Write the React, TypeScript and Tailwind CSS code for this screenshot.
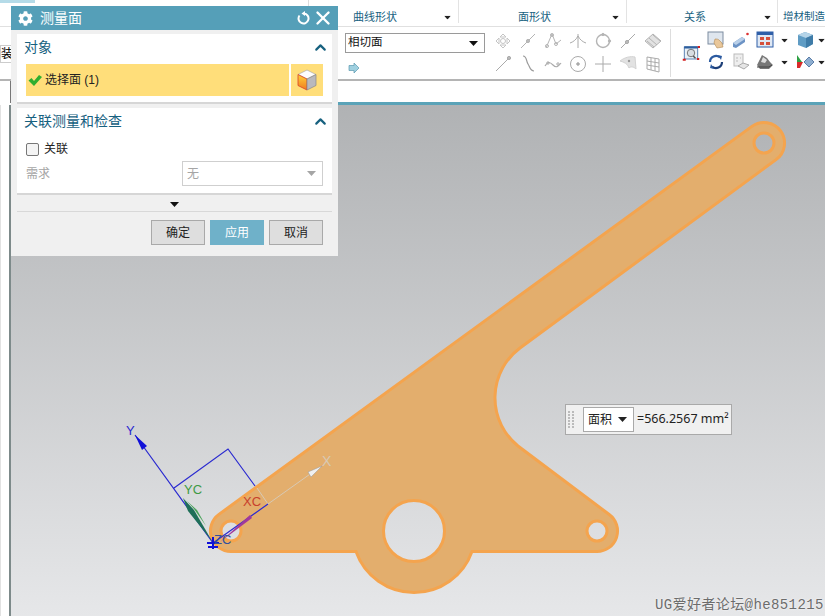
import { ChevronUp, X } from "lucide-react";
import { FaCog } from "react-icons/fa";

const font = "font-['Liberation_Sans','Noto_Sans_CJK_SC',sans-serif]";

function Caret({ className = "" }: { className?: string }) {
  return (
    <svg width="9" height="5" viewBox="0 0 9 5" className={className}>
      <path d="M0 0h9L4.5 5z" fill="currentColor" />
    </svg>
  );
}

// grey, disabled curve tools, first row then second row
const curveTools = [
  <g key="a" fill="none" stroke="#c4c4c4"><circle cx="10" cy="10" r="2.5" /><path d="M3 10l3-3v6zM17 10l-3-3v6zM10 3l-3 3h6zM10 17l-3-3h6z" /></g>,
  <g key="b" fill="none" stroke="#b4b4b4"><path d="M3 17L17 3" /><circle cx="10" cy="10" r="1.6" fill="#bbb" /></g>,
  <g key="c" fill="none" stroke="#b4b4b4"><path d="M3 17L9 3l4 10 5-4" /><circle cx="9" cy="4" r="1.5" /><circle cx="13" cy="13" r="1.5" /><circle cx="4" cy="15" r="1.5" /></g>,
  <g key="d" fill="none" stroke="#aaa"><path d="M10 3v14M2 12c3-1 6-3 8-7 2 4 5 6 8 7" /></g>,
  <g key="e" fill="none" stroke="#b4b4b4"><circle cx="10" cy="10" r="6.5" strokeWidth="1.4" /><circle cx="10" cy="3.5" r="1.2" /><circle cx="16.5" cy="10" r="1.2" /></g>,
  <g key="f" fill="none" stroke="#aaa"><path d="M3 17L17 3" /><circle cx="9" cy="11" r="1.6" fill="#bbb" /></g>,
  <g key="g" stroke="#b4b4b4" fill="#e2e2e2"><path d="M2 10l8-7 8 7-8 7z" /><path d="M6 7l8 7M10 4l7 6M4 10l7 6" fill="none" /></g>,
  <g key="h" fill="none" stroke="#aaa"><path d="M3 17L15 5" /><circle cx="16" cy="4" r="1.6" fill="#bbb" /></g>,
  <g key="i" fill="none" stroke="#999"><path d="M5 2c4 0 3 5 5 8s2 7 6 7" strokeWidth="1.2" /></g>,
  <g key="j" fill="none" stroke="#aaa"><path d="M2 12c3-5 5-4 8-1s5 2 8-2" strokeWidth="1.2" /><circle cx="5" cy="9" r="1.2" /><circle cx="15" cy="10" r="1.2" /></g>,
  <g key="k" fill="none" stroke="#aaa"><circle cx="10" cy="10" r="7.5" /><circle cx="10" cy="10" r="1.3" fill="#aaa" /></g>,
  <g key="l" fill="none" stroke="#aaa"><path d="M10 2v16M2 10h16" /></g>,
  <g key="m"><path d="M2 7c5-4 11-5 15-4l1 12c-2-2-5-3-7-1-1-4-5-6-9-7z" fill="#e2e2e2" stroke="#d2d2d2" /><circle cx="11" cy="7" r="1.2" fill="#999" /></g>,
  <g key="n" fill="none" stroke="#aaa"><path d="M4 3l12 2v13L4 15zM8 4v12M12 4.500v12.500M4 7l12 2M4 11l12 2" /></g>,
];

function CameraFrame() {
  return (
    <svg width="18" height="18" viewBox="0 0 24 24">
      <rect x="3" y="4" width="18" height="16" fill="#e9f0f7" stroke="#2d5f9e" />
      <rect x="3" y="3" width="18" height="3" fill="#2d5f9e" />
      <circle cx="12" cy="12" r="5" fill="#d8dde2" stroke="#555" />
      <path d="M15 16l3 3" stroke="#555" strokeWidth="2" />
      <path d="M1 21h4M21 4h3M20 20h3" stroke="#d32020" strokeWidth="2.500" />
    </svg>
  );
}

const rightTools = [
  <svg key="hand" width="18" height="18" viewBox="0 0 18 18"><rect x="1" y="1" width="15" height="12" fill="#dfe6ee" stroke="#7c8ca0" /><path d="M8 8c2 0 3 0 4 1l3 3 1 4-6 1-3-5z" fill="#e9c79a" stroke="#b08a55" strokeWidth=".6" /></svg>,
  <svg key="beam" width="18" height="18" viewBox="0 0 18 18"><path d="M1 12l9-6 3 2v3l-9 6-3-1z" fill="#6c93c5" /><path d="M10 6l3 2-9 6-3-2z" fill="#b9cfe8" /><circle cx="15.500" cy="3" r="1.300" fill="#dd3030" /></svg>,
  <svg key="grid" width="18" height="18" viewBox="0 0 18 18"><rect x="1" y="1" width="16" height="15" fill="#dfe8f4" stroke="#2f5fa8" /><rect x="1" y="1" width="16" height="3" fill="#2f5fa8" /><path d="M4 6h4v3H4zM10 6h4v3h-4zM4 11h4v3H4zM10 11h4v3h-4z" fill="#d6503c" /></svg>,
  <svg key="box" width="18" height="18" viewBox="0 0 18 18"><path d="M9 1l8 3v9l-7 4-8-3V4z" fill="#5f9cc4" /><path d="M2 4l7-3 8 3-7 3z" fill="#b5d4e8" /><path d="M10 7l7-3v9l-7 4z" fill="#3f7ca8" /></svg>,
  <svg key="spin" width="18" height="18" viewBox="0 0 18 18" fill="none"><path d="M3 9a6 6 0 0 1 10-4.500" stroke="#2b5aa0" strokeWidth="2.200" /><path d="M15 9a6 6 0 0 1-10 4.500" stroke="#1d3f78" strokeWidth="2.200" /><path d="M11 2l4 1-1 4zM7 16l-4-1 1-4z" fill="#2b5aa0" /></svg>,
  <svg key="sheet" width="18" height="18" viewBox="0 0 18 18" fill="none" stroke="#bbb"><rect x="2" y="1" width="9" height="12" fill="#eee" /><path d="M4 5h2M4 8h2M8 5h1" /><path d="M6 13l5-3 6 2-5 4z" fill="#e5e5e5" stroke="#aaa" /></svg>,
  <svg key="scan" width="18" height="18" viewBox="0 0 18 18"><path d="M1 12l5-10 5 3 3 4 3 3-4 4H4z" fill="#777" /><path d="M5 9l2-5 4 3-2 3z" fill="#ddd" /><path d="M1 14l12 0 3-2" stroke="#444" fill="none" /></svg>,
  <svg key="color" width="20" height="18" viewBox="0 0 20 18"><path d="M9 9l5-5 5 5-5 5z" fill="#8eaed0" stroke="#5b7ea8" /><path d="M2 2v8l5-1z" fill="#2ea043" /><path d="M2 9l6 0-3 6H2z" fill="#d92a2a" /></svg>,
];

function Part() {
  const outline =
    "M751.900 126.400L218.900 514.400A20.500 20.500 0 0 0 231 551.500L356 551.500A61.500 61.500 0 0 0 472 551.500L597 551.500A20.500 20.500 0 0 0 609.200 514.500L518 446A62 62 0 0 1 520 348L776.100 159.600A20.500 20.500 0 0 0 751.900 126.400Z";
  const hole = (x: number, y: number, r: number) =>
    `M${x - r} ${y}a${r} ${r} 0 1 0 ${r * 2} 0a${r} ${r} 0 1 0 ${-r * 2} 0Z`;
  return (
    <svg viewBox="11 105 814 511" className="block w-[814px] h-[511px]">
      <path
        d={`${outline}${hole(764, 143, 10)}${hole(231, 531, 10)}${hole(597, 531, 10)}${hole(414, 531, 30.5)}`}
        fill="#e3ae6d"
        fillRule="evenodd"
        stroke="#f4a44e"
        strokeWidth="3"
      />
      {/* csys */}
      <path d="M268 504L320 467M257 488L268 504" stroke="#d8c9b4" strokeWidth="1" fill="none" />
      <path d="M322 466L308 472L311 477Z" fill="#f0f0f0" stroke="#999" strokeWidth=".5" />
      <text x="322" y="466" fontSize="14" fill="#d8c9b4" fontFamily="Liberation Sans">X</text>
      <path d="M174 488L228 449L255 486M213 543L135 435M213 543L268 504" stroke="#2a2ad0" strokeWidth="1.200" fill="none" />
      <path d="M135 435L147 446L142 450Z" fill="#1010d8" />
      <path d="M183 498L194 510L212 541L188 511Z" fill="#1f6f58" />
      <path d="M187 501L197 510L206 526L194 509Z" fill="#49a35a" />
      <path d="M250 515L252 518L220 542Z" fill="#a0389c" />
      <path d="M207 543H219M213 537V549M208 547H218" stroke="#1010d8" strokeWidth="2" />
      <text x="126" y="435" fontSize="13" fill="#2a2ad0" fontFamily="Liberation Sans">Y</text>
      <text x="184" y="494" fontSize="13" fill="#3f9a45" fontFamily="Liberation Sans">YC</text>
      <text x="243" y="506" fontSize="13" fill="#c8402c" fontFamily="Liberation Sans">XC</text>
      <text x="214" y="544" fontSize="13" fill="#33509a" fontFamily="Liberation Sans">ZC</text>
    </svg>
  );
}

function DialogButton({ label, primary }: { label: string; primary?: boolean }) {
  return (
    <button
      className={
        primary
          ? "w-[54px] h-[25px] bg-[#6fb1c9] text-white text-xs"
          : "w-[54px] h-[25px] bg-[#dedede] border border-[#a9a9a9] text-[#222] text-xs"
      }
    >
      {label}
    </button>
  );
}

function SectionHeader({ title }: { title: string }) {
  return (
    <div className="flex items-center justify-between h-[26px] pl-[7px] pr-[3px] text-[14px] text-[#17617f]">
      <span>{title}</span>
      <ChevronUp size={17} strokeWidth={3} className="text-[#17617f]" />
    </div>
  );
}

export default function App() {
  return (
    <div className={`relative w-[825px] h-[616px] overflow-hidden bg-white ${font}`}>
      {/* ribbon */}
      <div className="absolute left-0 top-0 w-[35px] h-[3px] bg-[#b5dbe8]" />
      <header className="h-[105px] bg-white">
        <div className="flex h-[27px] border-b border-[#e0e0e0] text-[11px] text-[#17617f]">
          <div className="w-[309px] shrink-0 border-r border-[#ddd]" />
          <div className="w-[150px] shrink-0 pl-[44px] pr-[6px] pt-[9px] flex justify-between border-r border-[#e3e3e3] mb-[3px]">
            <span>曲线形状</span>
            <Caret className="text-[#222] mt-[6px] scale-75" />
          </div>
          <div className="w-[168px] shrink-0 pl-[59px] pr-[6px] pt-[9px] flex justify-between border-r border-[#e3e3e3] mb-[3px]">
            <span>面形状</span>
            <Caret className="text-[#222] mt-[6px] scale-75" />
          </div>
          <div className="w-[151px] shrink-0 pl-[57px] pr-[5px] pt-[9px] flex justify-between border-r border-[#e3e3e3] mb-[3px]">
            <span>关系</span>
            <Caret className="text-[#222] mt-[6px] scale-75" />
          </div>
          <div className="pl-[5px] pt-[9px] text-[10.500px] whitespace-nowrap">增材制造</div>
        </div>
        <div className="flex h-[54px] border-b-2 border-[#b4b4b4]">
          <div className="w-[345px] shrink-0 pt-[18px]">
            <div className="w-[12px] h-[18px] border border-[#ccc] text-[12px] leading-[16px] overflow-hidden text-right">装</div>
          </div>
          <div className="w-[140px] shrink-0 pt-[6px]">
            <div className="h-[20px] border border-[#9a9a9a] flex items-center justify-between pl-[2px] pr-[6px] text-[11.500px] text-[#111]">
              <span>相切面</span>
              <Caret className="text-[#111]" />
            </div>
            <svg width="12" height="12" viewBox="0 0 12 12" className="mt-[9px] ml-[3px]">
              <path d="M1 3.500h5V1l5 5-5 5V8.500H1z" fill="#9fd0e0" stroke="#5a9ab0" strokeWidth=".7" />
            </svg>
          </div>
          <div className="w-[186px] shrink-0 pl-[5px] my-[2px] border-r border-[#ddd] grid grid-cols-[repeat(7,25px)] grid-rows-[23px_23px] items-center justify-items-center">
            {curveTools.map((tool, i) => (
              <svg key={i} width="20" height="20" viewBox="0 0 20 20">
                {tool}
              </svg>
            ))}
          </div>
          <div className="w-[33px] shrink-0 pl-[7px] flex items-center justify-center">
            <CameraFrame />
          </div>
          <div className="flex-1 grid grid-cols-[24px_25px_24px_14px_28px_4px] grid-rows-[22px_22px] pt-[2px] items-center justify-items-center">
            {rightTools.slice(0, 3)}
            <Caret className="text-[#222] scale-75" />
            {rightTools[3]}
            <Caret className="text-[#222] scale-75" />
            {rightTools.slice(4, 7)}
            <Caret className="text-[#222] scale-75" />
            {rightTools[7]}
            <Caret className="text-[#222] scale-75" />
          </div>
        </div>
        <div className="h-[22px] ml-[10px] border-l border-[#777]" />
      </header>
      <div className="absolute left-[11px] top-[102px] right-0 h-[3px] bg-[#5aa3b8]" />

      {/* graphics window */}
      <main className="flex h-[511px]">
        <div className="w-[11px] bg-white border-r-2 border-[#7d8a8a] border-l border-l-[#e2e2e2]" />
        <div className="flex-1 bg-linear-to-b from-[#b0b2b4] to-[#e6e7e9]">
          <Part />
        </div>
      </main>

      {/* measure dialog */}
      <section className="absolute left-[11px] top-[6px] w-[327px] h-[250px] bg-[#f0f0f0] flex flex-col">
        <div className="h-[24px] bg-[#559fb8] flex items-center text-white pl-[7px] pr-[4px]">
          <FaCog size={15} />
          <span className="ml-[7px] text-[14px] flex-1">测量面</span>
          <svg width="14" height="14" viewBox="0 0 14 14" className="mr-[1px]" fill="none">
            <path d="M2.500 4.500A5 5 0 1 0 7 2.500" stroke="white" strokeWidth="2" />
            <path d="M8 0L4.500 2.500L8 5Z" fill="white" />
          </svg>
          <X size={22} strokeWidth={2.600} />
        </div>
        <div className="px-[6px] pt-[4px] flex-1 flex flex-col">
          <div className="h-[70px] bg-white border-b-2 border-[#d6d6d6]">
            <SectionHeader title="对象" />
            <div className="flex mx-[9px] mt-[4px] h-[32px] gap-[2px]">
              <div className="flex-1 bg-[#ffde7a] flex items-center pl-[2px] text-[12px] text-[#222]">
                <svg width="14" height="12" viewBox="0 0 14 12">
                  <path d="M.5 6.500L3.500 4L6 7L11 1L14 3L6 12Z" fill="#2fae2f" />
                </svg>
                <span className="ml-[3px]">选择面 (1)</span>
              </div>
              <div className="w-[32px] bg-[#ffde7a] flex items-center justify-center">
                <svg width="22" height="22" viewBox="0 0 22 22">
                  <defs>
                    <linearGradient id="cubeFace" x1="0" y1="0" x2="0" y2="1">
                      <stop offset="0" stopColor="#ffd23a" />
                      <stop offset="1" stopColor="#f07a1e" />
                    </linearGradient>
                  </defs>
                  <path d="M11 1l9 4.500-9 4.500-9-4.500z" fill="#fdfdfd" stroke="#aaa" strokeWidth=".7" />
                  <path d="M2 5.500l9 4.500v11l-9-4.500z" fill="url(#cubeFace)" stroke="#d8402a" strokeWidth=".8" />
                  <path d="M20 5.500l-9 4.500v11l9-4.500z" fill="#b9b9bd" stroke="#888" strokeWidth=".7" />
                </svg>
              </div>
            </div>
          </div>
          <div className="h-[87px] mt-[4px] bg-white border-b-2 border-[#d6d6d6]">
            <SectionHeader title="关联测量和检查" />
            <div className="flex items-center h-[20px] mt-[5px] pl-[9px] text-[12px] text-[#222]">
              <span className="w-[13px] h-[13px] border border-[#777] rounded-[2px] bg-[#f4f4f4]" />
              <span className="ml-[5px]">关联</span>
            </div>
            <div className="flex items-center justify-between mt-[2px] pl-[9px] pr-[9px] text-[12px] text-[#a5a5a5]">
              <span>需求</span>
              <div className="w-[141px] h-[25px] border border-[#cfcfcf] flex items-center justify-between pl-[4px] pr-[6px]">
                <span>无</span>
                <Caret className="text-[#a5a5a5]" />
              </div>
            </div>
          </div>
          <div className="h-[17px] shrink-0 flex items-center justify-center border-b border-[#d8d8d8] text-[#111]">
            <Caret className="mt-[3px]" />
          </div>
          <div className="flex justify-end gap-[5px] pt-[8px] pr-[9px]">
            <DialogButton label="确定" />
            <DialogButton label="应用" primary />
            <DialogButton label="取消" />
          </div>
        </div>
      </section>

      {/* result tag */}
      <div className="absolute left-[565px] top-[404px] w-[167px] h-[31px] bg-[#f0f0f0] border border-[#a9a9a9] flex items-center text-[12px] text-[#222]">
        <div className="w-[7px] ml-[2px] grid grid-cols-2 gap-[1px]">
          {Array.from({ length: 12 }).map((_, i) => (
            <span key={i} className="w-[2px] h-[2px] bg-[#bbb]" />
          ))}
        </div>
        <div className="ml-[8px] w-[51px] h-[25px] bg-white border border-[#a9a9a9] flex items-center justify-between pl-[4px] pr-[6px]">
          <span>面积</span>
          <Caret />
        </div>
        <span className="ml-[3px] text-[12.500px] font-['Noto_Sans'] whitespace-nowrap">=566.2567 mm²</span>
      </div>

      {/* forum watermark */}
      <div className="absolute left-[655px] top-[596px] whitespace-nowrap text-[14px] leading-[18px] tracking-[0.400px] text-[#6c6c6c] font-['Liberation_Mono','Noto_Sans_CJK_SC',monospace] [text-shadow:0_0_2px_#fff]">
        UG爱好者论坛@he851215
      </div>
    </div>
  );
}
